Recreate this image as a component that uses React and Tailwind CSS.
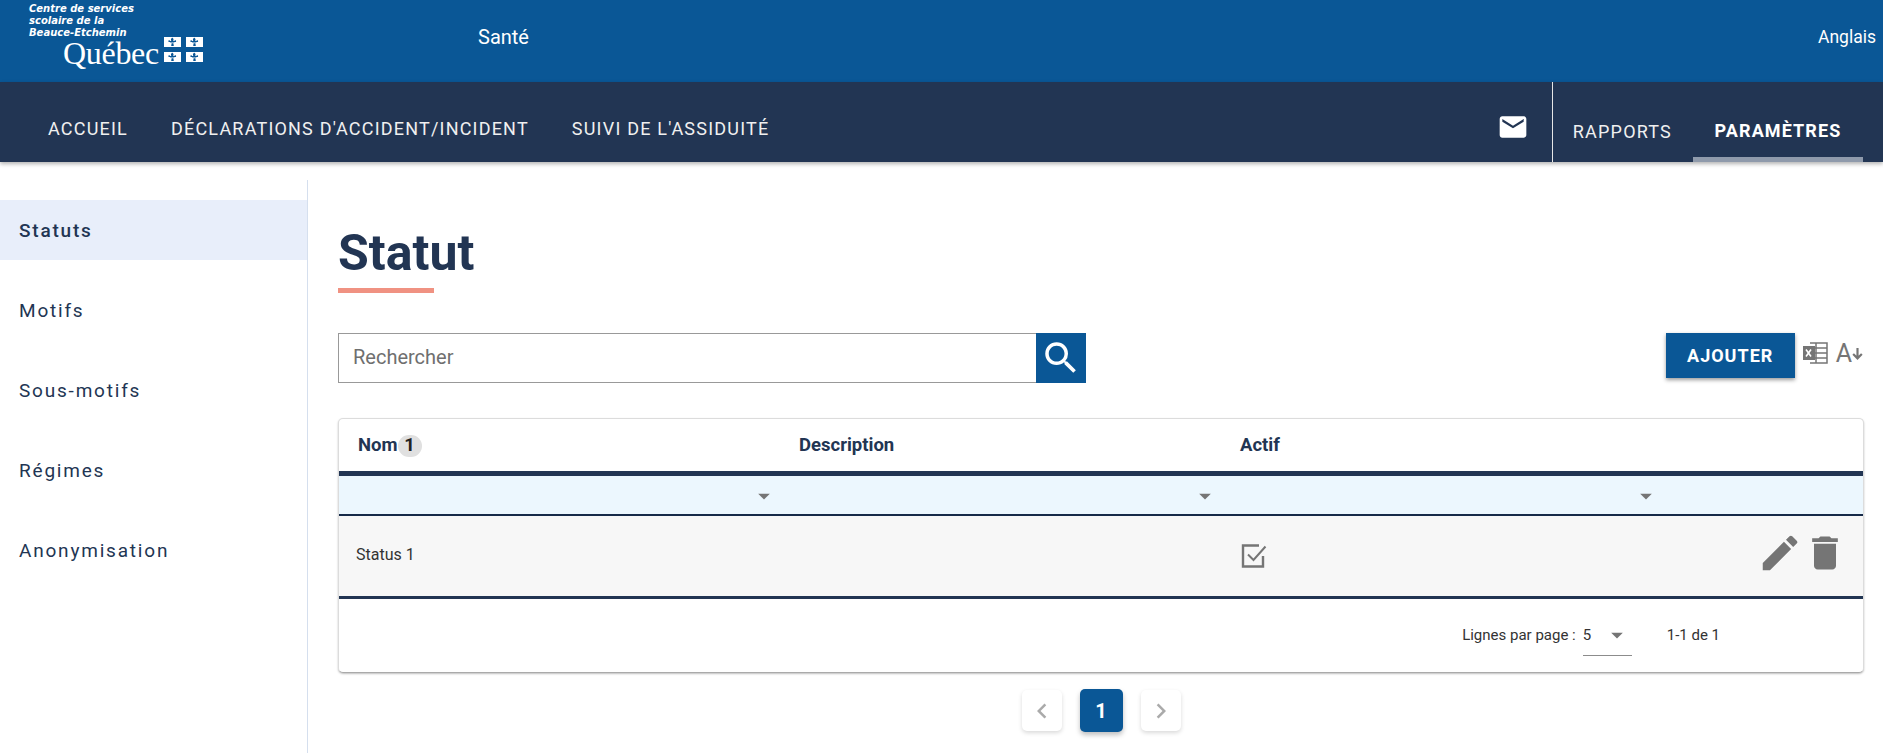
import { MdEmail, MdSearch, MdEdit, MdDelete, MdArrowDropDown, MdChevronLeft, MdChevronRight } from "react-icons/md"

const sideItems = ["Statuts", "Motifs", "Sous-motifs", "Régimes", "Anonymisation"]

const FlagCell = () => (
  <svg viewBox="0 0 17 10" className="w-[17px] h-[10px]">
    <rect width="17" height="10" fill="#fff" />
    <path d="M8.500.8c1.100 1 1.300 2 .7 3.200h1.100c.4-1 2-.8 1.800.4-.1.7-.9.800-1.400.5l-.7.7H6.500l-.7-.7c-.5.3-1.300.2-1.400-.5-.2-1.200 1.400-1.400 1.800-.4h1.100c-.6-1.200-.4-2.200.7-3.200zM7.600 6.200h1.800l.4 2.800H7.200z" fill="#0a5796" />
  </svg>
)

const Logo = () => (
  <div className="w-[200px] ml-[29px] pt-[3px] text-white">
    <div className="font-['DejaVu_Sans'] italic font-bold text-[10px] leading-[12px]">
      <div>Centre de services</div>
      <div>scolaire de la</div>
      <div>Beauce-Etchemin</div>
    </div>
    <div className="flex items-center ml-[34px]">
      <span className="font-['Liberation_Serif'] text-[32px] leading-[28px] tracking-[-0.3px]">Québec</span>
      <div className="grid grid-cols-2 gap-x-[5px] gap-y-[5px] ml-[5px] -mt-[7px]">
        <FlagCell /><FlagCell /><FlagCell /><FlagCell />
      </div>
    </div>
  </div>
)

const ExcelIcon = () => (
  <svg viewBox="0 0 26 24" className="w-[26px] h-[24px]" fill="none" stroke="#757575" strokeWidth="1.500">
    <path d="M8 2h17v20H8M14 2v20M8 7h17M8 12h17M8 17h17" />
    <rect x="1" y="5" width="12" height="14" fill="#757575" stroke="none" />
    <path d="M4 8.500l5 7M9 8.500l-5 7" stroke="#fff" strokeWidth="1.600" />
  </svg>
)

// box is open at the top right, the tick runs out of it
const CheckIcon = () => (
  <svg viewBox="0 0 26 26" className="w-[26px] h-[26px]" fill="none" stroke="#757575" strokeWidth="2.400">
    <path d="M22 13v10.500H2V2.500h16" />
    <path d="M7 11.500l5.500 5.500L24.500 3.500" strokeWidth="2" />
  </svg>
)

function TopBar() {
  return (
    <div className="h-[82px] bg-[#0a5796] flex text-white">
      <div className="w-[478px]">
        <Logo />
      </div>
      <div className="flex-1 pt-[25px] text-[20px] leading-[24px]">Santé</div>
      <div className="pt-[25px] pr-[7px] text-[17.500px] leading-[24px]">Anglais</div>
    </div>
  )
}

function NavBar() {
  return (
    <div className="relative z-10 h-[80px] bg-[#223553] flex text-white shadow-[0_2px_4px_rgba(0,0,0,0.3)]">
      <div className="flex-1 flex items-center gap-[43px] pl-[48px] pt-[12px] text-[18px] tracking-[1.200px] text-[#f0f0f0]">
        <span>ACCUEIL</span>
        <span>DÉCLARATIONS D'ACCIDENT/INCIDENT</span>
        <span>SUIVI DE L'ASSIDUITÉ</span>
      </div>
      <div className="flex items-center pt-[10px] pr-[23px]">
        <MdEmail className="w-[32px] h-[32px]" />
      </div>
      <div className="w-px bg-[#e6e6e6]" />
      <div className="flex items-stretch pl-[20px] pr-[20px]">
        <div className="flex items-center pt-[18px] pr-[21px] text-[18px] tracking-[1.200px] text-[#f0f0f0]">RAPPORTS</div>
        <div className="w-[170px] flex items-center justify-center pt-[22px] border-b-[5px] border-[#8f9aab] text-[18px] font-bold tracking-[1.100px]">PARAMÈTRES</div>
      </div>
    </div>
  )
}

function Sidebar() {
  return (
    <div className="w-[308px] mt-[18px] border-r border-[#d5dfee] pt-[20px] flex flex-col gap-[20px] shrink-0">
      {sideItems.map((item, i) => (
        <div
          key={item}
          className={`h-[60px] flex items-center pl-[19px] pt-[2px] text-[19px] tracking-[1.800px] text-[#223553] ${i === 0 ? "bg-[#e8eefa] font-medium" : ""}`}
        >
          {item}
        </div>
      ))}
    </div>
  )
}

function DataTable() {
  return (
    <div className="rounded-[5px] border border-[#dcdcdc] border-b-[#aaa] shadow-[0_1px_2px_rgba(0,0,0,0.25)] overflow-hidden bg-white">
      <div className="h-[52px] grid grid-cols-[441px_441px_441px_1fr] items-center text-[18.500px] font-bold text-[#223553] pt-[2px]">
        <div className="pl-[19px] flex items-center">
          Nom
          <span className="w-[24px] h-[22px] rounded-full bg-[#e0e0e0] flex items-center justify-center text-[#222]">1</span>
        </div>
        <div className="pl-[19px]">Description</div>
        <div className="pl-[19px]">Actif</div>
        <div />
      </div>
      <div className="h-[45px] bg-[#ecf7fe] border-t-[5px] border-b-[2px] border-t-[#223553] border-b-[#162a48] grid grid-cols-[441px_441px_441px_1fr] items-center">
        {[0, 1, 2].map((i) => (
          <div key={i} className="flex justify-end pr-[2px] pt-[1px]">
            <MdArrowDropDown className="w-[28px] h-[28px] text-[#757575]" />
          </div>
        ))}
      </div>
      <div className="h-[83px] bg-[#f7f7f7] border-b-[3px] border-[#223553] grid grid-cols-[441px_441px_441px_1fr] items-center text-[16px] text-[#333]">
        <div className="pl-[17px] pb-[2px]">Status 1</div>
        <div />
        <div className="pl-[20px]">
          <CheckIcon />
        </div>
        <div className="flex justify-end items-center pr-[16px] pb-[6px]">
          <MdEdit className="w-[46px] h-[46px] text-[#757575]" />
          <MdDelete className="w-[44px] h-[44px] text-[#757575]" />
        </div>
      </div>
      <div className="h-[73px] flex items-start justify-end pr-[143px] pt-[26px] text-[15px] leading-[20px] text-[#333]">
        <span>Lignes par page :</span>
        <div className="w-[49px] h-[31px] ml-[7px] flex items-start border-b border-[#8c8c8c]">
          <span>5</span>
          <MdArrowDropDown className="w-[28px] h-[28px] ml-[12px] -mt-[4px] text-[#757575]" />
        </div>
        <span className="ml-[35px]">1-1 de 1</span>
      </div>
    </div>
  )
}

function Pager() {
  return (
    <div className="flex justify-center items-center gap-[18px] mt-[16px]">
      <div className="w-[40px] h-[41px] rounded-[5px] bg-white flex items-center justify-center shadow-[0_2px_4px_rgba(0,0,0,0.15)]">
        <MdChevronLeft className="w-[30px] h-[30px] text-[#aaa]" />
      </div>
      <div className="w-[43px] h-[43px] rounded-[5px] bg-[#0a5796] text-white font-bold text-[20px] flex items-center justify-center shadow-[0_3px_5px_rgba(0,0,0,0.25)]">1</div>
      <div className="w-[40px] h-[41px] rounded-[5px] bg-white flex items-center justify-center shadow-[0_2px_4px_rgba(0,0,0,0.15)]">
        <MdChevronRight className="w-[30px] h-[30px] text-[#aaa]" />
      </div>
    </div>
  )
}

export default function App() {
  return (
    <div className="h-[753px] w-[1883px] overflow-hidden bg-white font-['Roboto',sans-serif] flex flex-col">
      <TopBar />
      <NavBar />
      <div className="flex-1 flex">
        <Sidebar />
        <div className="flex-1 pl-[30px] pr-[19px]">
          <h1 className="mt-[63px] text-[50px] leading-[56px] font-bold text-[#223553]">Statut</h1>
          <div className="w-[96px] h-[5px] mt-[7px] bg-[#f09282]" />
          <div className="flex items-start mt-[40px]">
            <div className="w-[748px] h-[50px] flex border border-[#999]">
              <div className="flex-1 flex items-center pl-[14px] pb-[2px] text-[20px] text-[#6f6f6f]">Rechercher</div>
              <div className="w-[50px] bg-[#0a5796] flex items-center justify-center -my-px -mr-px">
                <MdSearch className="w-[42px] h-[42px] text-white" />
              </div>
            </div>
            <div className="flex-1" />
            <div className="w-[129px] h-[45px] bg-[#0a5796] text-white font-bold text-[18px] tracking-[1px] flex items-center justify-center shadow-[0_2px_4px_rgba(0,0,0,0.4)]">AJOUTER</div>
            <div className="flex items-center ml-[7px] mr-[1px] h-[40px] text-[#757575]">
              <ExcelIcon />
              <span className="ml-[8px] text-[25px] leading-none">A</span>
              <svg viewBox="0 0 10 12" className="w-[11px] h-[13px]" fill="none" stroke="#757575" strokeWidth="2">
                <path d="M5 1v9M1 6.500l4 4 4-4" />
              </svg>
            </div>
          </div>
          <div className="mt-[35px]">
            <DataTable />
          </div>
          <Pager />
        </div>
      </div>
    </div>
  )
}
